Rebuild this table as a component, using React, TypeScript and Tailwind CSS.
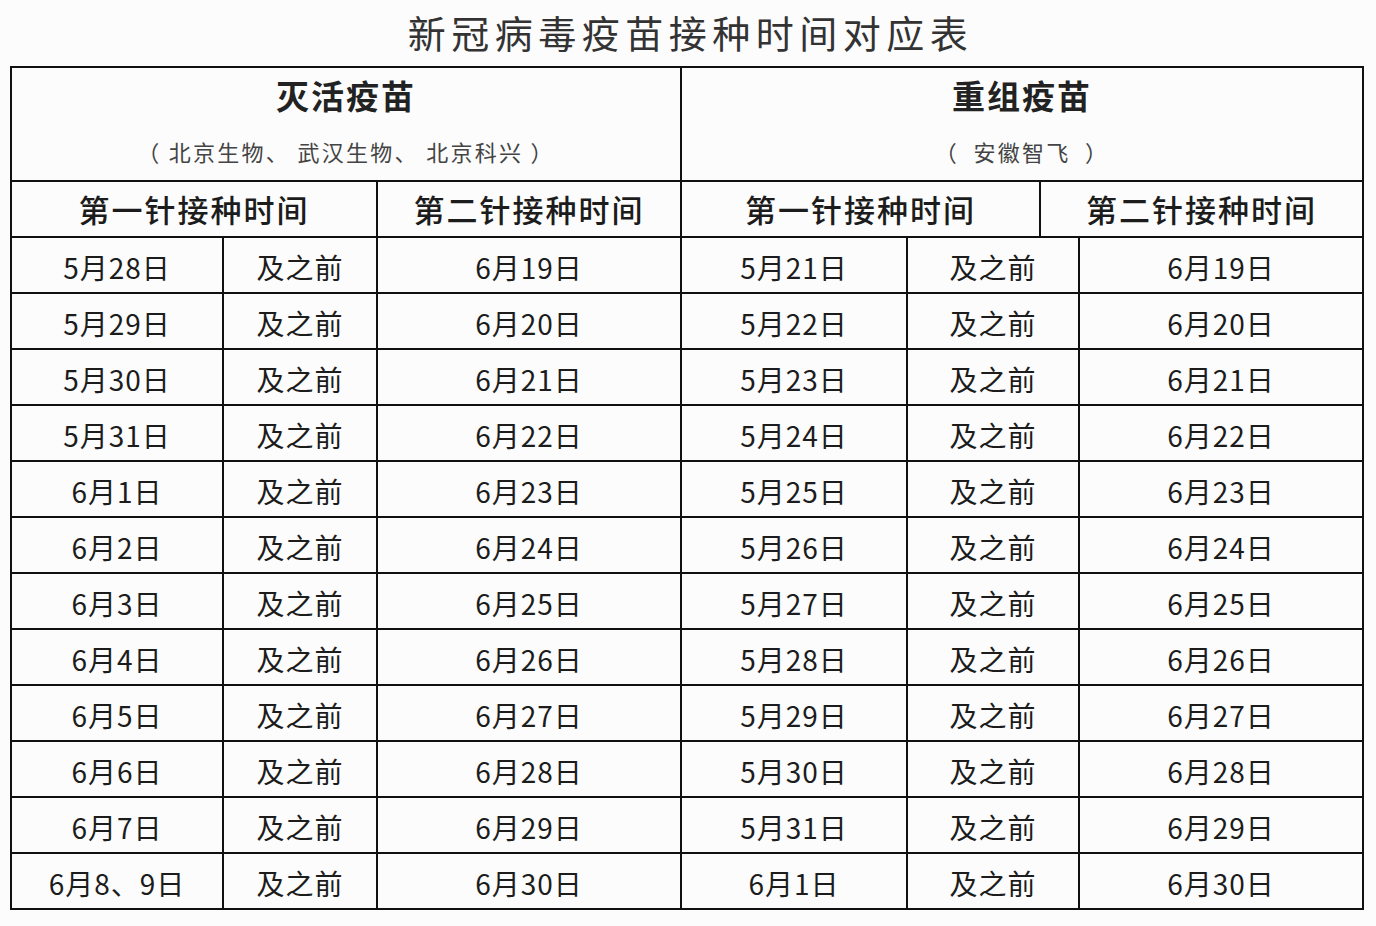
const leftRows: [string, string][] = [
  ["5月28日", "6月19日"],
  ["5月29日", "6月20日"],
  ["5月30日", "6月21日"],
  ["5月31日", "6月22日"],
  ["6月1日", "6月23日"],
  ["6月2日", "6月24日"],
  ["6月3日", "6月25日"],
  ["6月4日", "6月26日"],
  ["6月5日", "6月27日"],
  ["6月6日", "6月28日"],
  ["6月7日", "6月29日"],
  ["6月8、9日", "6月30日"],
];

const rightRows: [string, string][] = [
  ["5月21日", "6月19日"],
  ["5月22日", "6月20日"],
  ["5月23日", "6月21日"],
  ["5月24日", "6月22日"],
  ["5月25日", "6月23日"],
  ["5月26日", "6月24日"],
  ["5月27日", "6月25日"],
  ["5月28日", "6月26日"],
  ["5月29日", "6月27日"],
  ["5月30日", "6月28日"],
  ["5月31日", "6月29日"],
  ["6月1日", "6月30日"],
];

const cell = "border-r-2 border-b-2 border-[#111] flex items-center justify-center";

export default function App() {
  return (
    <div
      className="w-[1376px] h-[926px] bg-[#fcfcfc] text-[#1c1c1c]"
      style={{ fontFamily: '"Noto Sans CJK SC", "Noto Sans", sans-serif' }}
    >
      {/* title */}
      <div className="h-[66px] flex items-center justify-center pb-[2px]">
        <h1 className="text-[38px] leading-none tracking-[5.5px] text-[#333] font-normal pl-[5px]">
          新冠病毒疫苗接种时间对应表
        </h1>
      </div>

      <div className="ml-[10px] w-[1354px] border-l-2 border-t-2 border-[#111] grid grid-cols-[212px_154px_304px_226px_133px_39px_284px] grid-rows-[114px_56px] auto-rows-[56px]">
        {/* group headers */}
        <div className="col-span-3 border-r-2 border-b-2 border-[#111] flex flex-col items-center pt-[8px]">
          <div className="text-[33px] leading-[38px] font-bold text-[#222] tracking-[2px]">灭活疫苗</div>
          <div className="mt-[23px] text-[22px] leading-[28px] text-[#444] tracking-[2.3px]">
            （ 北京生物、 武汉生物、 北京科兴 ）
          </div>
        </div>
        <div className="col-span-4 border-r-2 border-b-2 border-[#111] flex flex-col items-center pt-[8px]">
          <div className="text-[33px] leading-[38px] font-bold text-[#222] tracking-[2px]">重组疫苗</div>
          <div className="mt-[23px] text-[22px] leading-[28px] text-[#444] tracking-[2.3px] whitespace-pre">
            （  安徽智飞  ）
          </div>
        </div>

        {/* dose headers */}
        <div className={`${cell} col-span-2 text-[31px] font-medium tracking-[2px]`}>第一针接种时间</div>
        <div className={`${cell} text-[31px] font-medium tracking-[2px]`}>第二针接种时间</div>
        <div className={`${cell} col-span-2 text-[31px] font-medium tracking-[2px]`}>第一针接种时间</div>
        <div className={`${cell} col-span-2 text-[31px] font-medium tracking-[2px]`}>第二针接种时间</div>

        {/* data rows */}
        {leftRows.map((l, i) => {
          const r = rightRows[i];
          return (
            <div key={i} className="contents text-[28px] tracking-[1px]">
              <div className={`${cell} pt-[4px]`}>{l[0]}</div>
              <div className={`${cell} pt-[4px]`}>及之前</div>
              <div className={`${cell} pt-[4px]`}>{l[1]}</div>
              <div className={`${cell} pt-[4px]`}>{r[0]}</div>
              <div className={`${cell} col-span-2 pt-[4px]`}>及之前</div>
              <div className={`${cell} pt-[4px]`}>{r[1]}</div>
            </div>
          );
        })}
      </div>
    </div>
  );
}
